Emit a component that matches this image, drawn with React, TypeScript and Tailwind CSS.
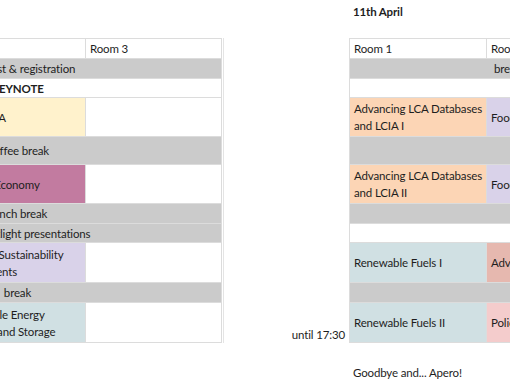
import React from "react";

type Cell = { text?: string; bg?: string; bold?: boolean };
type Row = { h: string; span?: { text: string; bg: string; bold?: boolean; align?: string }; cells?: Cell[] };

// row heights shared by both days so the two tables line up
const H = ["h-[20px]", "h-[20px]", "h-[19px]", "h-[39px]", "h-[28px]", "h-[39px]", "h-[20px]", "h-[19px]", "h-[40px]", "h-[20px]", "h-[40px]"];

const leftRows: Row[] = [
  { h: H[0], cells: [{ text: "Room 1" }, { text: "Room 2" }, { text: "Room 3" }] },
  { h: H[1], span: { text: "Breakfast & registration", bg: "bg-[#cbcbcb]" } },
  { h: H[2], span: { text: "KEYNOTE", bg: "bg-white", bold: true } },
  { h: H[3], cells: [{ text: "Prospective LCA", bg: "bg-[#fce5cd]" }, { text: "Social LCA", bg: "bg-[#fff2cc]" }, {}] },
  { h: H[4], span: { text: "Coffee break", bg: "bg-[#cbcbcb]" } },
  { h: H[5], cells: [{ text: "Buildings", bg: "bg-[#d0e0e3]" }, { text: "Circular Economy", bg: "bg-[#c27ba0]" }, {}] },
  { h: H[6], span: { text: "Lunch break", bg: "bg-[#cbcbcb]" } },
  { h: H[7], span: { text: "Poster spotlight presentations", bg: "bg-[#cbcbcb]" } },
  { h: H[8], cells: [{ text: "Mobility", bg: "bg-[#f4cccc]" }, { text: "Regional Sustainability Assessments", bg: "bg-[#d9d2e9]" }, {}] },
  { h: H[9], span: { text: "break", bg: "bg-[#cbcbcb]" } },
  { h: H[10], cells: [{ text: "Agriculture", bg: "bg-[#fce5cd]" }, { text: "Renewable Energy Systems and Storage", bg: "bg-[#d0e0e3]" }, {}] },
];

const rightRows: Row[] = [
  { h: H[0], cells: [{ text: "Room 1" }, { text: "Room 2" }] },
  { h: H[1], span: { text: "break", bg: "bg-[#cbcbcb]", align: "pl-[144px]" } },
  { h: H[2], span: { text: "", bg: "bg-white" } },
  { h: H[3], cells: [{ text: "Advancing LCA Databases and LCIA I", bg: "bg-[#fcd5b5]" }, { text: "Food Systems I", bg: "bg-[#d9d2e9]" }] },
  { h: H[4], span: { text: "", bg: "bg-[#cbcbcb]" } },
  { h: H[5], cells: [{ text: "Advancing LCA Databases and LCIA II", bg: "bg-[#fcd5b5]" }, { text: "Food Systems II", bg: "bg-[#d9d2e9]" }] },
  { h: H[6], span: { text: "", bg: "bg-[#cbcbcb]" } },
  { h: H[7], span: { text: "", bg: "bg-white" } },
  { h: H[8], cells: [{ text: "Renewable Fuels I", bg: "bg-[#d0e0e3]" }, { text: "Advances in Methods", bg: "bg-[#e6b8af]" }] },
  { h: H[9], span: { text: "", bg: "bg-[#cbcbcb]" } },
  { h: H[10], cells: [{ text: "Renewable Fuels II", bg: "bg-[#d0e0e3]" }, { text: "Policy Support", bg: "bg-[#f4cccc]" }] },
];

const Schedule = ({ rows, widths }: { rows: Row[]; widths: string[] }) => (
  <div className="border-t border-l border-[#dcdcdc] flex flex-col w-max">
    {rows.map((r, i) => (
      <div key={i} className={`flex ${r.h}`}>
        {r.span ? (
          <div
            className={`flex-1 flex items-center border-r border-b border-[#dcdcdc] ${r.span.bg} ${
              r.span.align ? r.span.align : "justify-center"
            } ${r.span.bold ? "font-bold" : ""}`}
          >
            <span className="whitespace-nowrap">{r.span.text}</span>
          </div>
        ) : (
          r.cells!.map((c, j) => (
            <div
              key={j}
              className={`${widths[j]} shrink-0 flex items-center px-[4px] border-r border-b border-[#dcdcdc] ${c.bg ?? "bg-white"}`}
            >
              <span>{c.text}</span>
            </div>
          ))
        )}
      </div>
    ))}
  </div>
);

export default function App() {
  return (
    <div className="w-[510px] h-[382px] overflow-hidden bg-white font-['Lato',sans-serif] text-[11.5px] tracking-[-0.15px] leading-[17px] text-[#1e1e1e]">
      <div className="flex w-max">
        {/* 10th April, cut off on the left */}
        <div className="shrink-0 ml-[-187px] pt-[38px]">
          <div className="border-r border-[#e4e4e4] pr-px">
            <Schedule rows={leftRows} widths={["w-[136px]", "w-[136px]", "w-[136px]"]} />
          </div>
        </div>

        {/* time column of 11th April */}
        <div className="shrink-0 w-[125px] h-[343px] flex flex-col justify-end items-end pr-[4px] pb-0">
          <span className="whitespace-nowrap">until 17:30</span>
        </div>

        {/* 11th April */}
        <div className="shrink-0">
          <div className="h-[38px] pt-[3px] pl-[4px] font-bold">11th April</div>
          <Schedule rows={rightRows} widths={["w-[137px]", "w-[136px]"]} />
          <div className="mt-[21px] pl-[4px]">Goodbye and... Apero!</div>
        </div>
      </div>
    </div>
  );
}
